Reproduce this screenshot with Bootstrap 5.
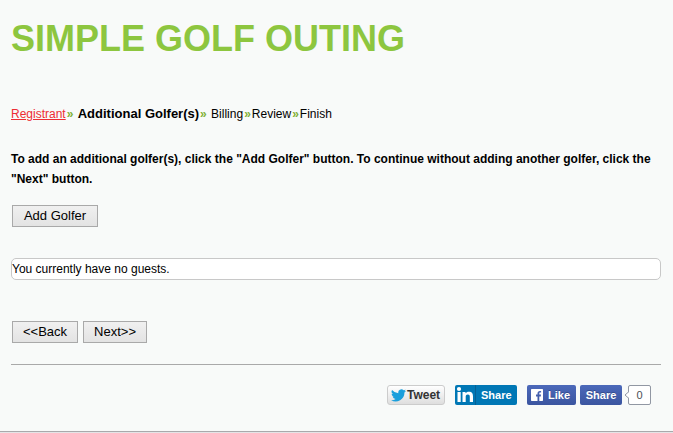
<!DOCTYPE html>
<html lang="en">
<head>
<meta charset="utf-8">
<meta name="viewport" content="width=device-width, initial-scale=1">
<title>Simple Golf Outing</title>
<link href="https://cdn.jsdelivr.net/npm/bootstrap@5.3.0/dist/css/bootstrap.min.css" rel="stylesheet">
<style>
body { background: #e4e4e6; color: #000; font: 12px/20px "Liberation Sans", Arial, sans-serif; }
.page { background: #f8faf9; border-bottom: 1px solid #a9a9ab; padding: 19px 12px 26px 11px; }
.title { color: #8dc63f; font-size: 36px; line-height: 40px; margin-bottom: 45px; }
.steps { margin-bottom: 25px; white-space: pre-wrap; }
.steps a { color: #ed2d33; }
.steps strong { font-size: 13px; }
.steps i { color: #7fb035; font-style: normal; font-weight: bold; margin: 0 1px; }
.intro { margin-bottom: 16px; }
.push { border: 1px solid #a9a9a9; border-radius: 0; background: linear-gradient(#f0f0f0, #e3e3e3); color: #000; font-size: 13px; line-height: 20px; padding: 0 10px; }
.add { min-width: 86px; }
.actions { margin-left: 1px; gap: 5px; }
.guests { background: #fff; border: 1px solid #c8c8c8; border-radius: 5px; margin: 31px 0 41px; }
.rule { border-color: #a9a9a9; opacity: 1; margin: 21px 0 20px; }
.social { margin-right: 10px; }
.social .btn { height: 20px; padding: 0; border: 0; border-radius: 3px; font-size: 11px; line-height: 20px; font-weight: bold; display: flex; align-items: center; color: #fff; }
.social .tweet { width: 58px; border: 1px solid #ccc; background: linear-gradient(#fff, #dedede); color: #333; padding-left: 3px; gap: 1px; font-size: 12px; }
.social .linkedin { width: 62px; background: #0077b5; border-radius: 2px; margin-left: 10px; }
.linkedin svg { border-right: 1px solid #066094; margin-right: 5px; }
.social .fb { background: linear-gradient(#4c69ba, #3b55a0); text-shadow: 0 -1px 0 #354c8c; border-radius: 2px; }
.social .like { width: 49px; margin-left: 10px; padding-left: 4px; gap: 5px; }
.social .share { width: 42px; margin-left: 4px; justify-content: center; }
.count { width: 23px; height: 20px; border: 1px solid #9197a3; border-radius: 2px; background: #fff; color: #4b4f56; font-size: 11px; line-height: 18px; }
.notch { margin: 0 -1px 0 2px; z-index: 1; }
</style>
</head>
<body>
<main class="page">
  <h1 class="title fw-bold">SIMPLE GOLF OUTING</h1>
  <nav class="steps" aria-label="Registration steps"><a href="#">Registrant</a><i>»</i> <strong>Additional Golfer(s)</strong><i>»</i> Billing<i>»</i>Review<i>»</i>Finish</nav>
  <p class="intro fw-bold">To add an additional golfer(s), click the "Add Golfer" button. To continue without adding another golfer, click the "Next" button.</p>
  <div class="actions d-flex"><button type="button" class="btn push add">Add Golfer</button></div>
  <div class="guests">You currently have no guests.</div>
  <div class="actions d-flex">
    <button type="button" class="btn push">&lt;&lt;Back</button>
    <button type="button" class="btn push">Next&gt;&gt;</button>
  </div>
  <hr class="rule">
  <div class="social d-flex justify-content-end align-items-center">
    <button type="button" class="btn tweet"><svg width="15" height="13" viewBox="0 0 24 20" aria-hidden="true"><path fill="#1a9fdc" d="M24 2.4a10 10 0 0 1-2.8.8A5 5 0 0 0 23.300.5a10 10 0 0 1-3.100 1.200A4.900 4.900 0 0 0 11.800 6.200 14 14 0 0 1 1.700 1a4.900 4.900 0 0 0 1.500 6.600A5 5 0 0 1 1 7c0 2.400 1.700 4.400 3.900 4.900a5 5 0 0 1-2.200.1 4.900 4.900 0 0 0 4.600 3.400A10 10 0 0 1 0 17.400 14 14 0 0 0 21.500 5 10 10 0 0 0 24 2.400z"/></svg>Tweet</button>
    <button type="button" class="btn linkedin"><svg width="21" height="20" viewBox="0 0 20 20" aria-hidden="true"><g fill="#fff"><circle cx="4" cy="4" r="2.100"/><path d="M2.500 7h3.200v10H2.500zM7.500 7h3v1.300c.6-1 1.900-1.600 3.400-1.600 3.200 0 4.100 2 4.100 4.700V17h-3.200v-5c0-1.300-.2-2.500-2-2.500s-2.100 1.200-2.100 2.500v5H7.500z"/></g></svg>Share</button>
    <button type="button" class="btn fb like"><svg width="12" height="12" viewBox="0 0 12 12" aria-hidden="true"><path fill="#fff" d="M.7 0h10.600a.7.700 0 0 1 .7.700v10.600a.7.700 0 0 1-.7.700H8.300V7.400h1.500L10 5.600H8.300V4.500c0-.5.200-.9.900-.9h.9V2c-.3 0-.8-.1-1.300-.1-1.400 0-2.300.9-2.300 2.400v1.300H5v1.800h1.500V12H.7a.7.700 0 0 1-.7-.7V.7A.7.700 0 0 1 .7 0z"/></svg>Like</button>
    <button type="button" class="btn fb share">Share</button>
    <svg class="notch position-relative" width="5" height="8" viewBox="0 0 5 8" aria-hidden="true"><path d="M5 .5L1 4l4 3.500" fill="#fff" stroke="#9197a3"/></svg>
    <span class="count text-center">0</span>
  </div>
</main>
<script src="https://cdn.jsdelivr.net/npm/bootstrap@5.3.0/dist/js/bootstrap.bundle.min.js"></script>
</body>
</html>
